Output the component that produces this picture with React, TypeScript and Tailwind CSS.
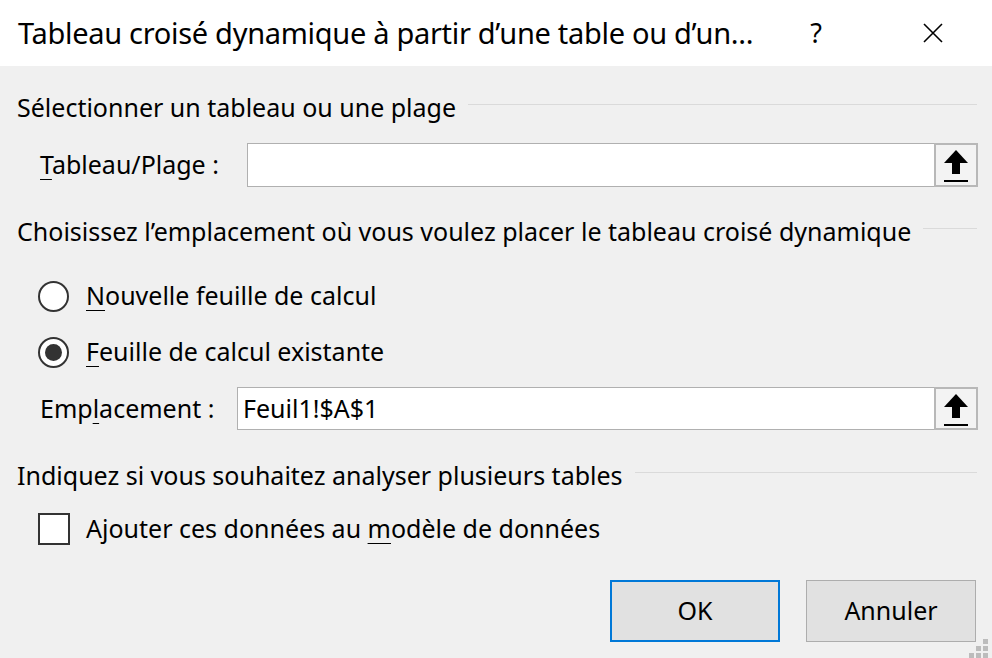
import React from "react";

const font = { fontFamily: '"Noto Sans", "Open Sans", sans-serif' };

function SectionHeader({ children }: { children: React.ReactNode }) {
  return (
    <div className="flex items-center h-[36px] pl-[17px] pr-[15px]">
      <span className="whitespace-nowrap text-[25px] leading-[36px]">{children}</span>
      <div className="flex-1 h-px bg-[#dadada] ml-[12px] -mt-[6px]" />
    </div>
  );
}

function RefButton() {
  return (
    <div className="w-[44px] h-full border-2 border-[#b8b8b8] bg-[#f3f3f3] flex items-start justify-center pt-[5px]">
      <svg width="26" height="34" viewBox="0 0 26 34">
        <polygon points="13,0 25,13 1,13" fill="#000" />
        <rect x="9" y="12" width="8" height="12" fill="#000" />
        <rect x="1" y="30" width="24" height="2" fill="#000" />
      </svg>
    </div>
  );
}

function RefInput({ value }: { value?: string }) {
  return (
    <div className="flex flex-1 h-full">
      <div className="flex-1 bg-white border border-[#b0b0b0] border-r-0 flex items-center pl-[5px] text-[25px]">
        {value}
      </div>
      <RefButton />
    </div>
  );
}

export default function App() {
  return (
    <div className="w-[992px] h-[658px] bg-[#f0f0f0] text-black relative overflow-hidden" style={font}>
      <div className="h-[66px] bg-white flex items-center pl-[18px]">
        <span className="text-[29px] tracking-[-0.3px] whitespace-nowrap">
          Tableau croisé dynamique à partir d’une table ou d’un...
        </span>
        <span className="text-[27px] ml-auto mr-[100px]">?</span>
        <svg width="22" height="22" viewBox="0 0 22 22" className="mr-[48px]">
          <path d="M2 2 L20 20 M20 2 L2 20" stroke="#000" strokeWidth="1.6" />
        </svg>
      </div>

      <div className="mt-[23px]">
        <SectionHeader>Sélectionner un tableau ou une plage</SectionHeader>
      </div>

      <div className="mt-[18px] h-[44px] flex items-center pl-[40px] pr-[14px]">
        <span className="text-[25px] w-[207px] whitespace-nowrap">
          <span className="underline underline-offset-[5px] decoration-1">T</span>ableau/Plage :
        </span>
        <RefInput />
      </div>

      <div className="mt-[26px]">
        <SectionHeader>Choisissez l’emplacement où vous voulez placer le tableau croisé dynamique</SectionHeader>
      </div>

      <div className="mt-[29px] h-[36px] flex items-center pl-[38px]">
        <div className="w-[31px] h-[31px] rounded-full border-2 border-[#333] bg-white" />
        <span className="text-[25px] ml-[17px]">
          <span className="underline underline-offset-[5px] decoration-1">N</span>ouvelle feuille de calcul
        </span>
      </div>

      <div className="mt-[20px] h-[36px] flex items-center pl-[38px]">
        <div className="w-[31px] h-[31px] rounded-full border-2 border-[#333] bg-white flex items-center justify-center">
          <div className="w-[17px] h-[17px] rounded-full bg-[#333]" />
        </div>
        <span className="text-[25px] ml-[17px]">
          <span className="underline underline-offset-[5px] decoration-1">F</span>euille de calcul existante
        </span>
      </div>

      <div className="mt-[17px] h-[43px] flex items-center pl-[40px] pr-[14px]">
        <span className="text-[25px] w-[197px] whitespace-nowrap">
          Emp<span className="underline underline-offset-[5px] decoration-1">l</span>acement :
        </span>
        <RefInput value="Feuil1!$A$1" />
      </div>

      <div className="mt-[27px]">
        <SectionHeader>Indiquez si vous souhaitez analyser plusieurs tables</SectionHeader>
      </div>

      <div className="mt-[18px] h-[36px] flex items-center pl-[38px]">
        <div className="w-[32px] h-[32px] border-2 border-[#333] bg-white" />
        <span className="text-[25px] ml-[16px]">
          Ajouter ces données au <span className="underline underline-offset-[5px] decoration-1">m</span>odèle de données
        </span>
      </div>

      <div className="mt-[33px] flex justify-end gap-[26px] pr-[16px]">
        <button className="w-[170px] h-[62px] bg-[#e1e1e1] border-2 border-[#0078d7] text-[25px]">OK</button>
        <button className="w-[170px] h-[62px] bg-[#e1e1e1] border border-[#adadad] text-[25px]">Annuler</button>
      </div>

      <div className="absolute right-[4px] bottom-0 w-[19px] h-[19px]">
        <div className="absolute left-[14px] top-0 w-[5px] h-[5px] bg-[#bcbcbc]" />
        <div className="absolute left-[7px] top-[7px] w-[5px] h-[5px] bg-[#bcbcbc]" />
        <div className="absolute left-[14px] top-[7px] w-[5px] h-[5px] bg-[#bcbcbc]" />
        <div className="absolute left-0 top-[14px] w-[5px] h-[5px] bg-[#bcbcbc]" />
        <div className="absolute left-[7px] top-[14px] w-[5px] h-[5px] bg-[#bcbcbc]" />
        <div className="absolute left-[14px] top-[14px] w-[5px] h-[5px] bg-[#bcbcbc]" />
      </div>
    </div>
  );
}
